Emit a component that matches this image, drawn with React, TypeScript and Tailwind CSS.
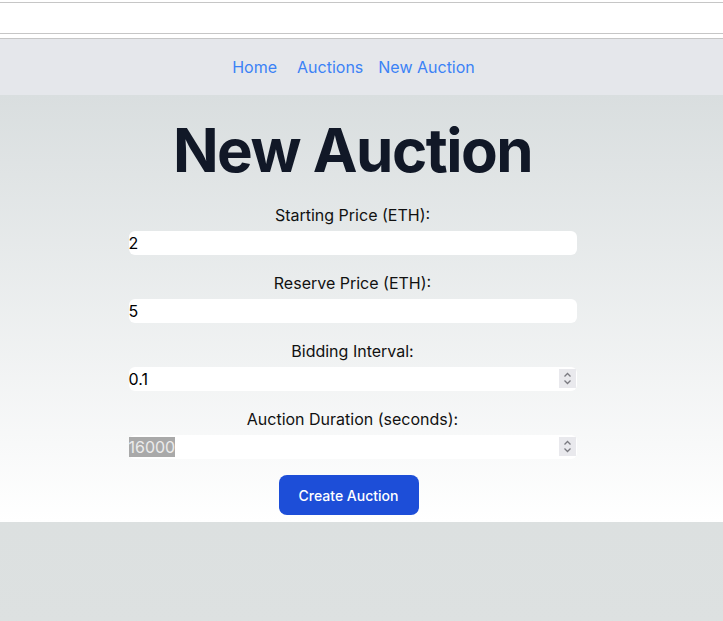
import React from 'react';

const fields = [
  { label: 'Starting Price (ETH):', value: '2' },
  { label: 'Reserve Price (ETH):', value: '5' },
  { label: 'Bidding Interval:', value: '0.1', spin: true },
  { label: 'Auction Duration (seconds):', value: '16000', spin: true, selected: true },
];

function Spinner() {
  return (
    <div className="absolute right-[1px] top-[2px] w-[17px] h-[19px] bg-[#e9e9ed] flex items-center justify-center">
      <svg width="11" height="15" viewBox="0 0 11 15" fill="none" stroke="#7a7a80" strokeWidth="1.3">
        <path d="M2.5 5.5 L5.5 2.5 L8.5 5.5" />
        <path d="M2.5 9.5 L5.5 12.5 L8.5 9.5" />
      </svg>
    </div>
  );
}

export default function App() {
  return (
    <div className="min-h-screen font-['Inter',sans-serif] bg-gradient-to-b from-[#d6dbdb] to-[#dde1e1]">
      {/* top strip */}
      <div className="bg-white h-[38px] pt-[2px]">
        <div className="h-px bg-[#c6c6c6]" />
        <div className="h-[30px]" />
        <div className="h-px bg-[#c6c6c6]" />
      </div>

      <nav className="h-[57px] bg-[#e5e7eb] border-t border-[#c6c6c6] flex items-center justify-center pr-4">
        <a className="text-[#3b82f6] text-base">Home</a>
        <a className="text-[#3b82f6] text-base ml-[20px]">Auctions</a>
        <a className="text-[#3b82f6] text-base ml-[15px]">New Auction</a>
      </nav>

      <main className="bg-gradient-to-b from-[#d9dedf] to-white pt-[25px] pb-[7px] pr-[18px] flex flex-col items-center">
        <h1 className="text-6xl leading-none font-bold tracking-tight text-[#111827] mb-[23px]">New Auction</h1>
        <form className="w-[448px] flex flex-col">
          {fields.map((f) => (
            <div key={f.label} className="mb-4">
              <label className="block text-center text-base leading-6 text-[#111]">{f.label}</label>
              <div className="relative mt-1 h-6 bg-white rounded-md text-base leading-6 text-black">
                {f.selected ? (
                  <span className="bg-[#a9a9a9] text-[#ececec]">{f.value}</span>
                ) : (
                  <span>{f.value}</span>
                )}
                {f.spin && <Spinner />}
              </div>
            </div>
          ))}
          <div className="flex justify-center pr-2">
            <button
              type="button"
              className="bg-[#1d4ed8] text-white text-sm font-medium w-[140px] h-10 pt-0.5 rounded-lg"
            >
              Create Auction
            </button>
          </div>
        </form>
      </main>
    </div>
  );
}
